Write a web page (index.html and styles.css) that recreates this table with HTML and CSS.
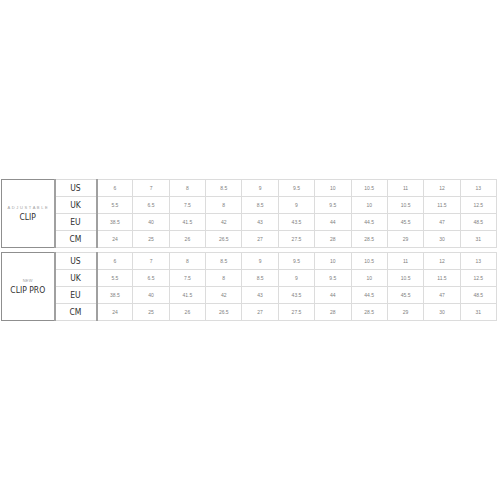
FILE: index.html
```html
<!DOCTYPE html>
<html>
<head>
<meta charset="utf-8">
<link rel="stylesheet" href="styles.css">
</head>
<body>
<div class="page">
  <table class="size">
    <colgroup><col class="c-name"><col class="c-lab"><col span="11"></colgroup>
    <tr><td class="name" rowspan="4"><div class="sub">A D J U S T A B L E</div><div class="model">CLIP</div></td><td class="lab">US</td><td>6</td><td>7</td><td>8</td><td>8.5</td><td>9</td><td>9.5</td><td>10</td><td>10.5</td><td>11</td><td>12</td><td>13</td></tr>
    <tr><td class="lab">UK</td><td>5.5</td><td>6.5</td><td>7.5</td><td>8</td><td>8.5</td><td>9</td><td>9.5</td><td>10</td><td>10.5</td><td>11.5</td><td>12.5</td></tr>
    <tr><td class="lab">EU</td><td>38.5</td><td>40</td><td>41.5</td><td>42</td><td>43</td><td>43.5</td><td>44</td><td>44.5</td><td>45.5</td><td>47</td><td>48.5</td></tr>
    <tr><td class="lab">CM</td><td>24</td><td>25</td><td>26</td><td>26.5</td><td>27</td><td>27.5</td><td>28</td><td>28.5</td><td>29</td><td>30</td><td>31</td></tr>
  </table>
  <table class="size">
    <colgroup><col class="c-name"><col class="c-lab"><col span="11"></colgroup>
    <tr><td class="name" rowspan="4"><div class="sub">NEW</div><div class="model">CLIP PRO</div></td><td class="lab">US</td><td>6</td><td>7</td><td>8</td><td>8.5</td><td>9</td><td>9.5</td><td>10</td><td>10.5</td><td>11</td><td>12</td><td>13</td></tr>
    <tr><td class="lab">UK</td><td>5.5</td><td>6.5</td><td>7.5</td><td>8</td><td>8.5</td><td>9</td><td>9.5</td><td>10</td><td>10.5</td><td>11.5</td><td>12.5</td></tr>
    <tr><td class="lab">EU</td><td>38.5</td><td>40</td><td>41.5</td><td>42</td><td>43</td><td>43.5</td><td>44</td><td>44.5</td><td>45.5</td><td>47</td><td>48.5</td></tr>
    <tr><td class="lab">CM</td><td>24</td><td>25</td><td>26</td><td>26.5</td><td>27</td><td>27.5</td><td>28</td><td>28.5</td><td>29</td><td>30</td><td>31</td></tr>
  </table>
</div>
</body>
</html>
```
FILE: styles.css
```css
html, body {
  margin: 0;
  padding: 0;
  background: #ffffff;
}
.page {
  padding: 179px 0 0 1px;
  display: flex;
  flex-direction: column;
  gap: 4px;
}
.size {
  width: 496px;
  border-collapse: collapse;
  table-layout: fixed;
  border: 1px solid #8f8f8f;
  font-family: "Liberation Sans", Arial, sans-serif;
}
.c-name { width: 53px; }
.c-lab { width: 42px; }
.size td {
  height: 16px;
  padding: 0;
  text-align: center;
  vertical-align: middle;
  border: 1px solid #dcdcdc;
  font-size: 5px;
  color: #808080;
  line-height: 1;
}
.size td.name {
  border: 1px solid #8f8f8f;
  border-right: 2px solid #a0a0a0;
}
.size td.lab {
  border-right: 2px solid #a0a0a0;
  font-family: "Liberation Sans Narrow", "DejaVu Sans Condensed", sans-serif;
  font-size: 8.5px;
  color: #303030;
}
.sub {
  font-size: 4px;
  color: #a0a0a0;
  letter-spacing: 0.3px;
  margin-bottom: 3px;
}
.model {
  font-family: "Liberation Sans Narrow", "DejaVu Sans Condensed", sans-serif;
  font-size: 8.5px;
  color: #303030;
}
```
